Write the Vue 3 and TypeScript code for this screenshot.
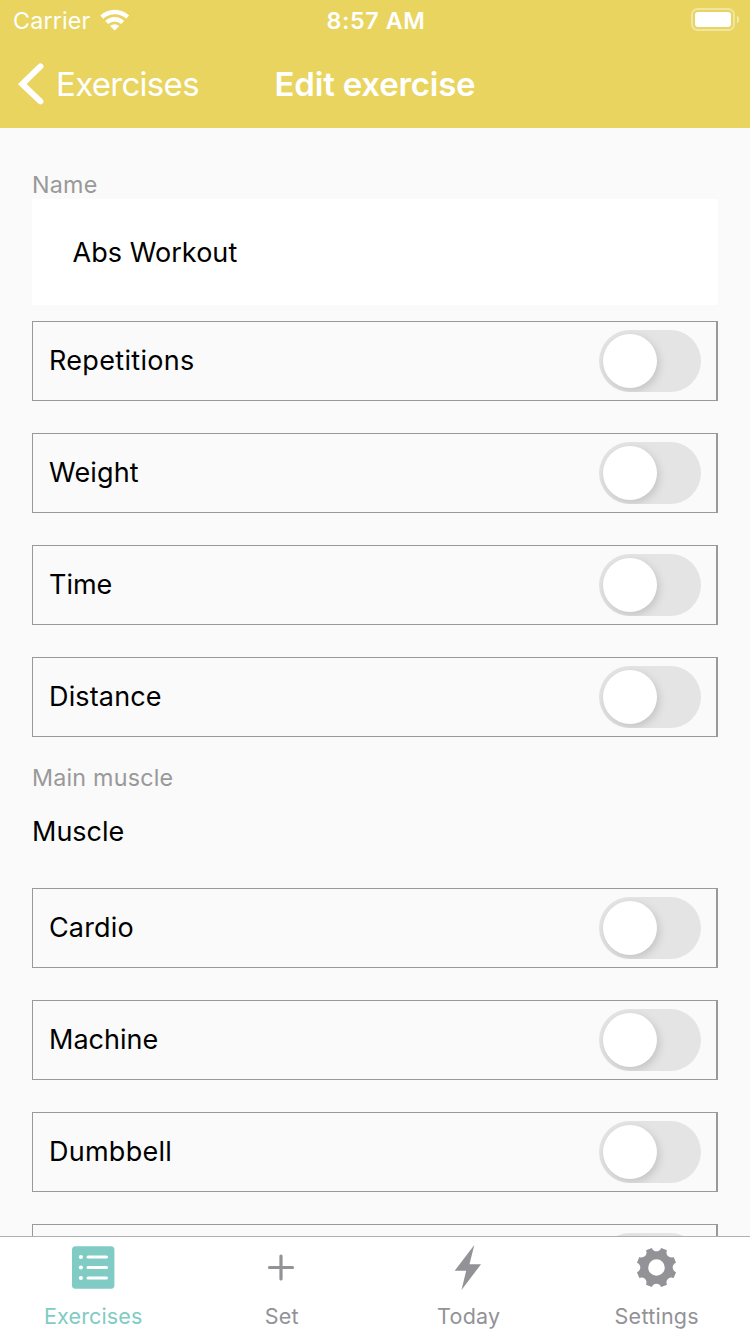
<script setup lang="ts">
import { ref } from 'vue'

interface Option {
  label: string
  on: boolean
  cls: string
}

const measures = ref<Option[]>([
  { label: 'Repetitions', on: false, cls: 'w-repetitions' },
  { label: 'Weight', on: false, cls: 'w-weight' },
  { label: 'Time', on: false, cls: 'w-time' },
  { label: 'Distance', on: false, cls: 'w-distance' },
])

const kinds = ref<Option[]>([
  { label: 'Cardio', on: false, cls: 'w-cardio' },
  { label: 'Machine', on: false, cls: 'w-machine' },
  { label: 'Dumbbell', on: false, cls: 'w-dumbbell' },
  { label: '', on: false, cls: 'w-last' },
])

const name = ref('Abs Workout')
const tabs = ['Exercises', 'Set', 'Today', 'Settings']
const active = ref('Exercises')

// Eight-toothed cog around (23.5, 23.5): a rounded notch every 45 degrees.
function cogPath(): string {
  const at = (radius: number, degrees: number): string => {
    const a = (degrees * Math.PI) / 180
    return `${(23.5 + radius * Math.sin(a)).toFixed(2)} ${(23.5 - radius * Math.cos(a)).toFixed(2)}`
  }
  let d = `M${at(20.1, -13.5)}`
  for (let i = 0; i < 8; i++) {
    const c = i * 45
    d += `C${at(15.4, c - 12)} ${at(15.4, c + 12)} ${at(20.1, c + 13.5)}`
    d += `L${at(20.1, c + 31.5)}`
  }
  return `${d}zM23.5 15.2a8.3 8.3 0 1 0 0 16.6a8.3 8.3 0 1 0 0-16.6z`
}
const cog = cogPath()
</script>

<template>
  <div class="screen">
    <header class="header">
      <div class="status">
        <div class="carrier">
          <span class="carrier-name">Carrier</span>
          <svg class="wifi" width="30" height="22" viewBox="0 0 30 22">
            <path d="M0.3 6.5a20.8 20.8 0 0 1 28.8 0l-2.9 3.2a16.8 16.8 0 0 0-23 0z" fill="#fff" />
            <path d="M5.2 11.9a13.7 13.7 0 0 1 19 0l-3 3.1a9.5 9.5 0 0 0-13 0z" fill="#fff" />
            <path d="M10.1 17.1a6.8 6.8 0 0 1 9.2 0l-4.6 4.5z" fill="#fff" />
          </svg>
        </div>
        <span class="clock">8:57 AM</span>
        <svg class="battery" width="50" height="24" viewBox="0 0 50 24">
          <rect x="2" y="1" width="42" height="21" rx="5.5" fill="none" stroke="#fff" stroke-opacity=".4" stroke-width="2" />
          <rect x="5" y="4" width="36" height="15" rx="3" fill="#fff" />
          <path d="M47 7.500c2.8 1.3 2.8 6.7 0 8z" fill="#fff" fill-opacity=".5" />
        </svg>
      </div>
      <div class="nav">
        <div class="back">
          <svg width="26" height="42" viewBox="0 0 26 42">
            <path d="M22.4 3.4 4.200 21l18.200 17.400" fill="none" stroke="#fff" stroke-width="6" stroke-linecap="round" stroke-linejoin="miter" />
          </svg>
          <span class="back-label">Exercises</span>
        </div>
        <span class="title">Edit exercise</span>
        <div class="nav-end"></div>
      </div>
    </header>

    <main class="form">
      <div class="caption name-caption"><span>Name</span></div>
      <div class="field"><span>{{ name }}</span></div>
      <div class="rows">
        <div v-for="o in measures" :key="o.label" class="row" @click="o.on = !o.on">
          <span :class="['row-label', o.cls]">{{ o.label }}</span>
          <span :class="['switch', { on: o.on }]"><i class="knob"></i></span>
        </div>
      </div>
      <div class="caption muscle-caption"><span>Main muscle</span></div>
      <div class="picker"><span>Muscle</span></div>
      <div class="rows">
        <div v-for="o in kinds" :key="o.cls" class="row" @click="o.on = !o.on">
          <span :class="['row-label', o.cls]">{{ o.label }}</span>
          <span :class="['switch', { on: o.on }]"><i class="knob"></i></span>
        </div>
      </div>
    </main>

    <nav class="tabs">
      <div v-for="t in tabs" :key="t" :class="['tab', 't-' + t.toLowerCase(), { active: t === active }]" @click="active = t">
        <svg class="icon" width="48" height="48" viewBox="0 0 48 48">
          <template v-if="t === 'Exercises'">
            <rect x="2" y="2.2" width="42.4" height="42.6" rx="3.5" fill="currentColor" />
            <g fill="#fff">
              <circle cx="10.900" cy="13" r="2.1" />
              <circle cx="10.900" cy="23.5" r="2.1" />
              <circle cx="10.900" cy="34" r="2.1" />
            </g>
            <path d="M18 13h18.500M18 23.500h18.500M18 34h18.500" stroke="#fff" stroke-width="3" stroke-linecap="round" />
          </template>
          <path v-else-if="t === 'Set'" d="M11.500 23.500h23M23 12v23" stroke="currentColor" stroke-width="3.2" stroke-linecap="round" />
          <path v-else-if="t === 'Today'" d="M30.3 1 10.7 26.700H22.200L17.500 46 37 20.200H25.500z" fill="currentColor" />
          <path v-else fill="currentColor" fill-rule="evenodd" :d="cog" />
        </svg>
        <span class="tab-label">{{ t }}</span>
      </div>
    </nav>
  </div>
</template>

<style>
html,
body {
  margin: 0;
  overflow: hidden;
}
</style>

<style scoped>
.screen {
  width: 750px;
  height: 1334px;
  display: flex;
  flex-direction: column;
  overflow: hidden;
  background: #fafafa;
  color: #000;
  font-family: Inter, Roboto, "Liberation Sans", sans-serif;
  font-size: 27px;
  white-space: nowrap;
}
.header {
  flex: none;
  height: 128px;
  background: #e8d45f;
  color: #fff;
}
.status {
  display: grid;
  grid-template-columns: 1fr auto 1fr;
  height: 40px;
  align-items: center;
  font-size: 23.3px;
}
.carrier {
  display: flex;
  align-items: center;
  padding-left: 13px;
}
.carrier-name {
  width: 87px;
  letter-spacing: 0.15px;
}
.clock {
  font-weight: 600;
  letter-spacing: 0.6px;
  padding-left: 2px;
}
.battery {
  justify-self: end;
  margin-right: 10px;
}
.nav {
  display: grid;
  grid-template-columns: 1fr auto 1fr;
  height: 88px;
  align-items: center;
  font-size: 33px;
}
.back {
  display: flex;
  align-items: center;
  padding-left: 18px;
}
.back svg {
  margin-top: -1px;
}
.back-label {
  margin-left: 12px;
  letter-spacing: -0.7px;
}
.title {
  font-weight: 600;
  letter-spacing: -0.2px;
}
.form {
  flex: 1;
  min-height: 0;
  overflow: hidden;
  padding: 42px 32px 0;
}
.caption {
  color: #999;
  font-size: 23.3px;
  line-height: 29px;
  letter-spacing: 0.2px;
}
.field {
  height: 106px;
  display: flex;
  align-items: center;
  padding-left: 40.5px;
  margin-bottom: 16px;
  background: #fff;
  letter-spacing: 0.05px;
}
.rows {
  display: flex;
  flex-direction: column;
  gap: 32px;
}
.row {
  box-sizing: border-box;
  flex: none;
  height: 80px;
  display: flex;
  align-items: center;
  justify-content: space-between;
  padding: 0 15px 0 16px;
  border: 1px solid #999;
  border-right-width: 2px;
}
.row-label {
  margin-top: -2px;
  letter-spacing: 0.15px;
}
.w-repetitions {
  letter-spacing: 0.32px;
}
.w-time,
.w-machine {
  letter-spacing: 0;
}
.w-dumbbell {
  letter-spacing: 0.25px;
}
.switch {
  box-sizing: border-box;
  width: 102px;
  height: 62px;
  padding: 4px;
  border-radius: 31px;
  background: #e4e4e4;
  overflow: hidden;
}
.knob {
  display: block;
  width: 54px;
  height: 54px;
  border-radius: 50%;
  background: #fff;
  box-shadow: 2px 3px 9px rgba(0, 0, 0, 0.15);
}
.switch.on {
  background: #80cbc4;
}
.switch.on .knob {
  margin-left: 40px;
}
.muscle-caption {
  margin-top: 26px;
}
.picker {
  height: 80px;
  line-height: 80px;
  margin-bottom: 16px;
}
.tabs {
  box-sizing: border-box;
  flex: none;
  height: 98px;
  display: grid;
  grid-template-columns: repeat(4, 1fr);
  border-top: 1px solid #b0b0b0;
  background: #fff;
}
.tab {
  display: flex;
  flex-direction: column;
  align-items: center;
  padding-top: 7px;
  color: #929297;
}
.tab.active {
  color: #80cbc4;
}
.icon {
  display: block;
}
.t-set .icon,
.t-settings .icon {
  margin-left: 1px;
}
.t-today .icon {
  margin-right: 1px;
}
.tab-label {
  margin-top: 10px;
  font-size: 21.5px;
  line-height: 28px;
  letter-spacing: 0.25px;
}
.t-exercises .tab-label {
  letter-spacing: 0.15px;
  margin-right: 1px;
}
.t-set .tab-label,
.t-settings .tab-label {
  margin-left: 1px;
}
</style>
